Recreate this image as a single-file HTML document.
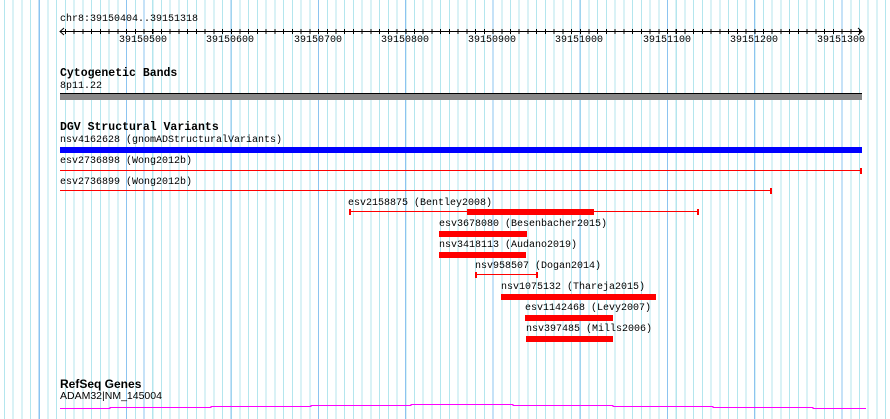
<!DOCTYPE html><html><head><style>
body{margin:0;width:890px;height:419px;position:relative;overflow:hidden;background:#fff;font-family:"Liberation Mono",monospace;font-size:10px;color:#000}
.g{position:absolute;left:0;top:0;width:890px;height:419px;
background-image:repeating-linear-gradient(90deg,#8cc4f0 0,#8cc4f0 1px,transparent 1px,transparent 87.25px),repeating-linear-gradient(90deg,#b4e6ee 0,#b4e6ee 1px,transparent 1px,transparent 8.725px);
background-position:143.5px 0,65px 0;background-repeat:repeat-x}
.t{position:absolute;white-space:pre;line-height:11px}
.b{font-weight:bold;font-size:11.5px}
.r{position:absolute;background:#f00}
</style></head><body>
<div class="g"></div>
<div class="t" style="left:60px;top:14px">chr8:39150404..39151318</div>
<svg style="position:absolute;left:0;top:0" width="890" height="60">
<line x1="60" y1="31.5" x2="862" y2="31.5" stroke="#000"/>
<path d="M64 28 L60 31.5 L64 35 M858 28 L862 31.5 L858 35" stroke="#000" fill="none"/>
</svg>
<div style="position:absolute;left:60px;top:29px;width:802px;height:5px;background-image:repeating-linear-gradient(90deg,#000 0,#000 1px,transparent 1px,transparent 8.725px);background-position:5px 0"></div>
<div class="t" style="left:119px;top:35px">39150500</div>
<div class="t" style="left:206px;top:35px">39150600</div>
<div class="t" style="left:294px;top:35px">39150700</div>
<div class="t" style="left:381px;top:35px">39150800</div>
<div class="t" style="left:468px;top:35px">39150900</div>
<div class="t" style="left:555px;top:35px">39151000</div>
<div class="t" style="left:643px;top:35px">39151100</div>
<div class="t" style="left:730px;top:35px">39151200</div>
<div class="t" style="left:817px;top:35px">39151300</div>
<div class="t b" style="left:60px;top:68px">Cytogenetic Bands</div>
<div class="t" style="left:60px;top:81px">8p11.22</div>
<div style="position:absolute;left:60px;top:93px;width:802px;height:6px;background:#888;border-top:1px solid #000"></div>
<div class="t b" style="left:60px;top:122px">DGV Structural Variants</div>
<div class="t" style="left:60px;top:135px">nsv4162628 (gnomADStructuralVariants)</div>
<div style="position:absolute;left:60px;top:147px;width:802px;height:6px;background:#0000ff"></div>
<div class="t" style="left:60px;top:156px">esv2736898 (Wong2012b)</div>
<div class="r" style="left:60px;top:170px;width:801px;height:1px"></div>
<div class="r" style="left:860px;top:168px;width:2px;height:6px"></div>
<div class="t" style="left:60px;top:177px">esv2736899 (Wong2012b)</div>
<div class="r" style="left:60px;top:190px;width:712px;height:1px"></div>
<div class="r" style="left:770px;top:188px;width:2px;height:6px"></div>
<div class="t" style="left:348px;top:198px">esv2158875 (Bentley2008)</div>
<div class="r" style="left:350px;top:211px;width:349px;height:1px"></div>
<div class="r" style="left:349px;top:209px;width:2px;height:6px"></div>
<div class="r" style="left:697px;top:209px;width:2px;height:6px"></div>
<div class="r" style="left:467px;top:209px;width:127px;height:6px"></div>
<div class="t" style="left:439px;top:219px">esv3678080 (Besenbacher2015)</div>
<div class="r" style="left:439px;top:231px;width:88px;height:6px"></div>
<div class="t" style="left:439px;top:240px">nsv3418113 (Audano2019)</div>
<div class="r" style="left:439px;top:252px;width:87px;height:6px"></div>
<div class="t" style="left:475px;top:261px">nsv958507 (Dogan2014)</div>
<div class="r" style="left:476px;top:274px;width:62px;height:1px"></div>
<div class="r" style="left:475px;top:272px;width:2px;height:6px"></div>
<div class="r" style="left:536px;top:272px;width:2px;height:6px"></div>
<div class="t" style="left:501px;top:282px">nsv1075132 (Thareja2015)</div>
<div class="r" style="left:501px;top:294px;width:155px;height:6px"></div>
<div class="t" style="left:525px;top:303px">esv1142468 (Levy2007)</div>
<div class="r" style="left:525px;top:315px;width:88px;height:6px"></div>
<div class="t" style="left:526px;top:324px">nsv397485 (Mills2006)</div>
<div class="r" style="left:526px;top:336px;width:87px;height:6px"></div>
<div class="t" style="left:60px;top:379px;font-family:'Liberation Sans',sans-serif;font-weight:bold;font-size:12px">RefSeq Genes</div>
<div class="t" style="left:60px;top:391px;font-family:'Liberation Sans',sans-serif;font-size:10.5px">ADAM32|NM_145004</div>
<svg style="position:absolute;left:0;top:395px" width="890" height="24">
<path d="M60 13.5H110V12.5H211V11.5H311V10.5H411V9.5H513V10.5H613V11.5H713V12.5H813V13.5H866" stroke="#f0f" fill="none"/>
</svg>
</body></html>
